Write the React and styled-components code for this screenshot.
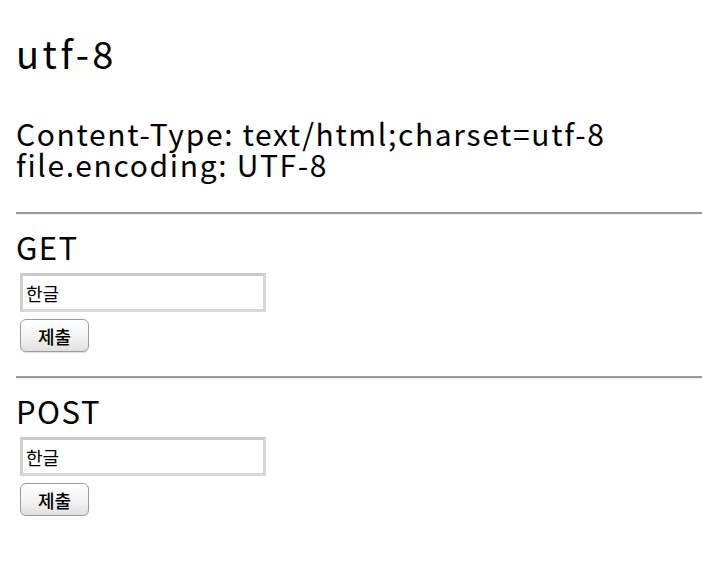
import React from 'react';
import styled, { createGlobalStyle } from 'styled-components';

const GlobalStyle = createGlobalStyle`
  html, body {
    margin: 0;
    padding: 0;
    background: #fff;
  }
  body {
    font-family: "Noto Sans CJK KR", "Noto Sans", sans-serif;
    color: #000;
  }
`;

const Page = styled.div`
  padding: 0 0 0 16px;
`;

const Title = styled.h1`
  margin: 0;
  padding-top: 31px;
  font-size: 38px;
  line-height: 44px;
  font-weight: normal;
  letter-spacing: 3.5px;
`;

const Info = styled.div`
  margin-top: 43px;
  font-size: 30px;
  line-height: 31px;
  letter-spacing: 1.65px;
`;

const Rule = styled.hr`
  margin: ${({ $top }) => $top}px 0 0 0;
  border: none;
  border-top: 2px solid #9a9a9a;
  border-bottom: 1px solid #ececec;
  height: 0;
`;

const Section = styled.form`
  display: flex;
  flex-direction: column;
  align-items: flex-start;
`;

const Label = styled.div`
  margin-top: 14px;
  font-size: 31px;
  line-height: 36px;
  letter-spacing: 1.5px;
`;

const Field = styled.input`
  box-sizing: border-box;
  margin: 8px 0 0 4px;
  width: 246px;
  height: 39px;
  padding: 0 3px;
  border: 3px solid #d8d8d8;
  border-top-color: #cbcbcb;
  border-left-color: #d0d0d0;
  background: #fff;
  font-family: "Noto Sans CJK KR", sans-serif;
  font-size: 18px;
  color: #000;
  outline: none;
`;

const Submit = styled.button`
  box-sizing: border-box;
  margin: 7px 0 0 4px;
  width: 69px;
  height: 33px;
  padding: 0;
  border: 1px solid #9c9c9c;
  border-radius: 6px;
  background: linear-gradient(#ffffff, #f4f4f4 50%, #e0e0e0);
  box-shadow: 0 1px 1px rgba(0, 0, 0, 0.15);
  font-family: "Noto Sans CJK KR", sans-serif;
  font-size: 18px;
  font-weight: 500;
  color: #000;
`;

const FormBlock = ({ method }) => (
  <Section method={method.toLowerCase()} onSubmit={(e) => e.preventDefault()}>
    <Label>{method}</Label>
    <Field type="text" name="text" defaultValue="한글" />
    <Submit type="submit">제출</Submit>
  </Section>
);

const App = () => (
  <>
    <GlobalStyle />
    <Page>
      <Title>utf-8</Title>
      <Info>
        <div>Content-Type: text/html;charset=utf-8</div>
        <div>file.encoding: UTF-8</div>
      </Info>
      <Rule $top={32} />
      <FormBlock method="GET" />
      <Rule $top={24} />
      <FormBlock method="POST" />
    </Page>
  </>
);

export default App;
